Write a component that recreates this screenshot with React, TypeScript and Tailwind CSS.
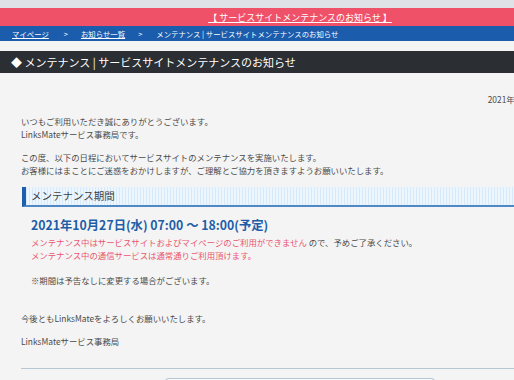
const font = "font-['Noto_Sans_CJK_JP','Noto_Sans',sans-serif]";

const Breadcrumb = () => (
    <div className="h-[15px] bg-[#1b5cad] flex items-center text-white text-[7.4px] leading-none whitespace-nowrap">
        <a className="ml-[12px] underline">マイページ</a>
        <span className="ml-[15px]">&gt;</span>
        <a className="ml-[13px] underline">お知らせ一覧</a>
        <span className="ml-[13px]">&gt;</span>
        <span className="ml-[14px]">メンテナンス | サービスサイトメンテナンスのお知らせ</span>
    </div>
);

export default function App() {
    return (
        <div className={`w-[600px] min-h-screen bg-[#f4f4f4] text-[#4a4a4a] ${font}`}>
            <div className="h-2 bg-[#dfe3e7]" />
            <div className="h-[18px] bg-[#ef5168] flex items-center justify-center">
                <span className="text-white text-[9px] leading-none underline whitespace-nowrap">【 サービスサイトメンテナンスのお知らせ 】</span>
            </div>
            <Breadcrumb />
            <div className="h-[10px]" />
            <div className="h-[22px] bg-[#2b2f34] flex items-center px-[11px] text-white text-[11px] leading-none whitespace-nowrap">
                ◆ メンテナンス | サービスサイトメンテナンスのお知らせ
            </div>

            <div className="pl-[21px] text-[8.4px] whitespace-nowrap">
                <p className="mt-[20px] leading-[12px] text-right pr-[50px]">2021年10月27日</p>

                <p className="mt-[10px] leading-[12.5px]">
                    いつもご利用いただき誠にありがとうございます。<br />
                    LinksMateサービス事務局です。
                </p>
                <p className="mt-[11px] leading-[12.5px]">
                    この度、以下の日程においてサービスサイトのメンテナンスを実施いたします。<br />
                    お客様にはまことにご迷惑をおかけしますが、ご理解とご協力を頂きますようお願いいたします。
                </p>

                <h2 className="mt-[11px] ml-px h-[20px] flex items-center border-l-4 border-b-2 border-l-[#1d5fae] border-b-[#4f88c6] bg-[#eef6fd] bg-[repeating-linear-gradient(90deg,#d6eafb_0_1px,transparent_1px_3px)] pl-[5px] text-[10.5px] text-[#3f3f3f] leading-none">
                    メンテナンス期間
                </h2>

                <div className="pl-[10px]">
                    <p className="mt-[10px] leading-[16px] text-[12.3px] font-bold text-[#1e5ea8]">
                        2021年10月27日(水) 07:00 ～ 18:00(予定)
                    </p>
                    <p className="mt-[3px] leading-[13px] text-[#ea5670]">
                        メンテナンス中はサービスサイトおよびマイページのご利用ができません <span className="text-[#4a4a4a]">ので、予めご了承ください。</span><br />
                        メンテナンス中の通信サービスは通常通りご利用頂けます。
                    </p>
                    <p className="mt-[12px] leading-[12px]">※期間は予告なしに変更する場合がございます。</p>
                </div>

                <p className="mt-[26px] leading-[12px]">今後ともLinksMateをよろしくお願いいたします。</p>
                <p className="mt-[11px] leading-[12px]">LinksMateサービス事務局</p>

                <div className="mt-[21px] border-t border-[#b7c8d5]" />
                <div className="mt-[9px] ml-[144px] w-[270px] h-[10px] rounded-t-[4px] border border-b-0 border-[#b7c8d5] bg-[#f8f9fa]" />
            </div>
        </div>
    );
}
